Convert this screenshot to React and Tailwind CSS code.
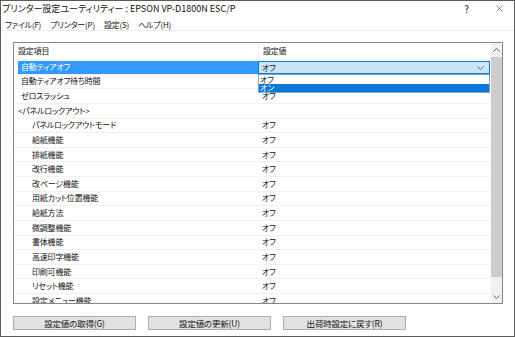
import { X } from 'lucide-react';

const rows = [
  { label: '自動ティアオフ', value: 'オフ', level: 1, selected: true },
  { label: '自動ティアオフ待ち時間', value: '', level: 1 },
  { label: 'ゼロスラッシュ', value: 'オフ', level: 1 },
  { label: '<パネルロックアウト>', value: '', level: 0 },
  { label: 'パネルロックアウトモード', value: 'オフ', level: 2 },
  { label: '給紙機能', value: 'オフ', level: 2 },
  { label: '排紙機能', value: 'オフ', level: 2 },
  { label: '改行機能', value: 'オフ', level: 2 },
  { label: '改ページ機能', value: 'オフ', level: 2 },
  { label: '用紙カット位置機能', value: 'オフ', level: 2 },
  { label: '給紙方法', value: 'オフ', level: 2 },
  { label: '微調整機能', value: 'オフ', level: 2 },
  { label: '書体機能', value: 'オフ', level: 2 },
  { label: '高速印字機能', value: 'オフ', level: 2 },
  { label: '印刷可機能', value: 'オフ', level: 2 },
  { label: 'リセット機能', value: 'オフ', level: 2 },
  { label: '設定メニュー機能', value: 'オフ', level: 2 },
];

const indent = { 0: 'pl-[0px]', 1: 'pl-[3px]', 2: 'pl-[14px]' };

const Chevron = ({ up }) => (
  <svg width="7" height="4" viewBox="0 0 7 4" className="shrink-0">
    <path d={up ? 'M0.5 3.5 L3.5 0.5 L6.5 3.5' : 'M0.5 0.5 L3.5 3.5 L6.5 0.5'} fill="none" stroke="#606060" strokeWidth="1" />
  </svg>
);

const Row = ({ row }) => (
  <div className="flex h-[14.625px] border-b border-[#f0f0f0] items-stretch">
    <div className="w-[244px] pl-[4px] flex">
      {row.selected ? (
        <div className="flex-1 bg-[#3399ff] text-white flex items-center pl-[3px] mt-[1px]">{row.label}</div>
      ) : (
        <div className={`flex-1 flex items-center ${indent[row.level]}`}>{row.label}</div>
      )}
    </div>
    <div className="flex-1 flex items-center pl-[4px]">
      {row.selected ? null : row.value}
    </div>
  </div>
);

const Button = ({ children }) => (
  <button className="w-[123px] h-[14px] bg-[#e1e1e1] border border-[#adadad] flex items-center justify-center leading-none text-[8.5px] tracking-[-0.2px]">
    {children}
  </button>
);

export default function App() {
  return (
    <div className="w-[515px] h-[337px] border border-[#5a5a5a] bg-white flex flex-col text-[9px] text-[#111] font-['Noto_Sans_CJK_JP',sans-serif] [font-feature-settings:'palt'] leading-none overflow-hidden">
      {/* Title bar */}
      <div className="h-[15px] flex items-center pl-[1px] shrink-0">
        <span>プリンター設定ユーティリティー : EPSON VP-D1800N ESC/P</span>
        <div className="ml-auto flex items-center">
          <span className="text-[10px] w-[35px] text-center">?</span>
          <div className="w-[30px] flex justify-center">
            <X size={11} strokeWidth={1} />
          </div>
        </div>
      </div>

      {/* Menu bar */}
      <div className="h-[15px] flex items-center pt-[3px] pl-[4px] gap-[9px] border-b border-[#ececec] shrink-0 text-[8px] tracking-[-0.2px]">
        <span>ファイル(F)</span>
        <span>プリンター(P)</span>
        <span>設定(S)</span>
        <span>ヘルプ(H)</span>
      </div>

      <div className="px-[12px] pt-[11px] text-[8px] tracking-[-0.2px]">
        {/* Grid */}
        <div className="w-[490px] h-[262px] border border-[#828790] flex">
          <div className="flex-1 relative overflow-hidden">
            <div className="flex h-[17px] border-b border-[#f0f0f0]">
              <div className="w-[244px] pl-[4px] flex items-center">設定項目</div>
              <div className="flex-1 pl-[4px] flex items-center border-l border-[#f0f0f0]">設定値</div>
            </div>
            {rows.map((r) => (
              <Row key={r.label} row={r} />
            ))}

            {/* Combo box in edit */}
            <div className="absolute left-[244px] top-[18px] w-[232px] h-[13px] bg-[#cce4f7] border border-[#0078d7] flex items-center pl-[3px] pr-[5px]">
              <span>オフ</span>
              <span className="ml-auto"><Chevron /></span>
            </div>
            {/* Dropdown list */}
            <div className="absolute left-[244px] top-[31px] w-[232px] h-[19px] bg-white border border-[#7aa7d6] flex flex-col overflow-hidden">
              <div className="h-[9px] flex items-end pl-[1px] overflow-hidden">オフ</div>
              <div className="h-[8px] bg-[#0a78d7] text-white flex items-end pl-[1px] overflow-hidden">オン</div>
            </div>
          </div>

          {/* Scrollbar */}
          <div className="w-[11px] bg-[#f0f0f0] flex flex-col">
            <div className="h-[14px] flex items-center justify-center"><Chevron up /></div>
            <div className="h-[220px] bg-[#cdcdcd]" />
            <div className="flex-1" />
            <div className="h-[13px] flex items-center justify-center"><Chevron /></div>
          </div>
        </div>

        {/* Buttons */}
        <div className="flex gap-[12px] mt-[12px]">
          <Button>設定値の取得(G)</Button>
          <Button>設定値の更新(U)</Button>
          <Button>出荷時設定に戻す(R)</Button>
        </div>
      </div>
    </div>
  );
}
